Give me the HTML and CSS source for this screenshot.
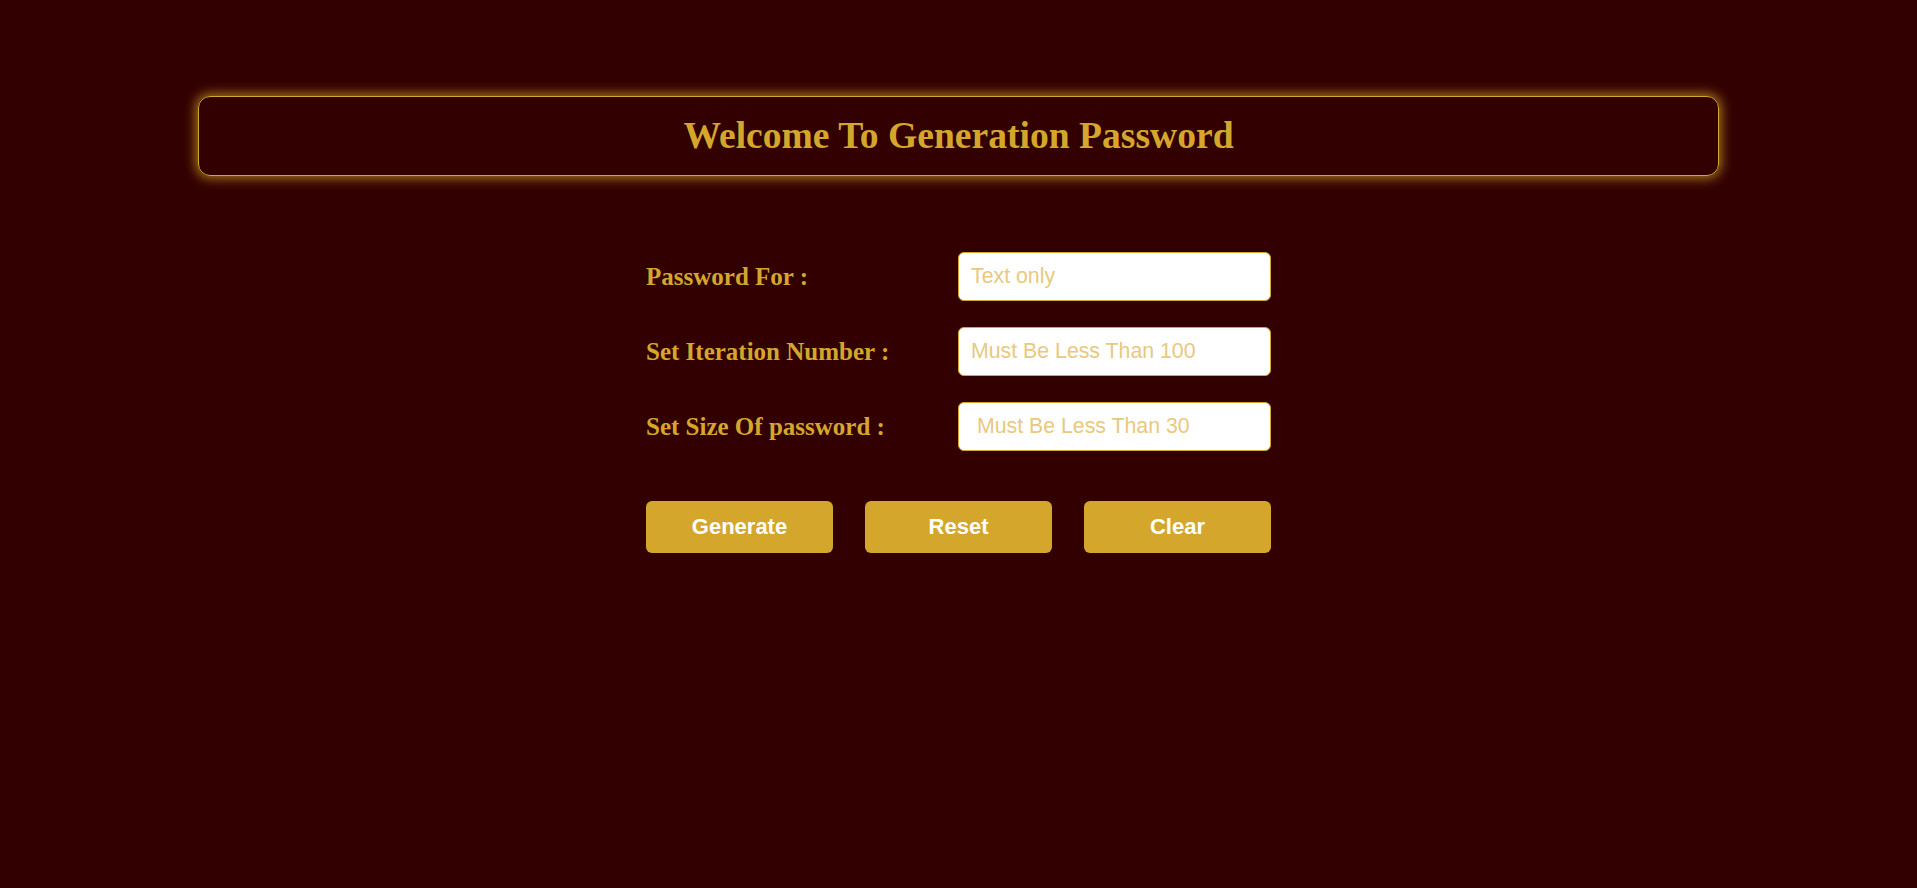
FILE: index.html
```html
<!DOCTYPE html>
<html lang="en">
<head>
<meta charset="utf-8">
<title>Generation Password</title>
<link rel="stylesheet" href="styles.css">
</head>
<body>
<header class="banner">
  <h1 class="banner-title">Welcome To Generation Password</h1>
</header>
<main class="panel">
  <form class="form-grid">
    <label class="field-label" for="pfor">Password For :</label>
    <input class="field-input" id="pfor" type="text" placeholder="Text only">
    <label class="field-label" for="piter">Set Iteration Number :</label>
    <input class="field-input" id="piter" type="text" placeholder="Must Be Less Than 100">
    <label class="field-label" for="psize">Set Size Of password :</label>
    <input class="field-input" id="psize" type="text" placeholder=" Must Be Less Than 30">
  </form>
  <div class="actions">
    <button class="btn" type="button">Generate</button>
    <button class="btn" type="button">Reset</button>
    <button class="btn" type="button">Clear</button>
  </div>
</main>
</body>
</html>
```
FILE: styles.css
```css
html, body {
  background: #330000;
}
body {
  margin: 8px;
  padding-top: 88px;
  font-family: "Liberation Serif", "Times New Roman", serif;
}
.banner {
  width: 80%;
  margin: 0 auto;
  box-sizing: border-box;
  border: 1px solid #d4a72c;
  border-radius: 12px;
  padding: 17px 0 18px;
  box-shadow: 0 0 12px 2px rgba(212, 167, 44, 0.75);
  text-align: center;
}
.banner-title {
  margin: 0;
  font-size: 37.6px;
  font-weight: bold;
  line-height: normal;
  color: #d4a72c;
}
.panel {
  width: 625px;
  margin: 76px auto 0;
}
.form-grid {
  display: grid;
  grid-template-columns: 312px 313px;
  grid-auto-rows: 49px;
  row-gap: 26px;
  align-items: center;
  margin: 0;
}
.field-label {
  font-family: "Liberation Serif", "Times New Roman", serif;
  font-size: 25px;
  font-weight: bold;
  color: #d4a72c;
}
.field-input {
  box-sizing: border-box;
  width: 313px;
  height: 49px;
  margin: 0;
  padding: 0 12px;
  border: 1px solid #d4a72c;
  border-radius: 6px;
  background: #ffffff;
  font-family: "Liberation Sans", Arial, sans-serif;
  font-size: 21.3px;
  color: #333333;
  outline: none;
}
.field-input::placeholder {
  color: #e8c97e;
  opacity: 1;
}
.actions {
  display: flex;
  justify-content: space-between;
  margin-top: 50px;
}
.btn {
  width: 187px;
  height: 52px;
  border: none;
  border-radius: 6px;
  background: #d4a72c;
  color: #ffffff;
  font-family: "Liberation Sans", Arial, sans-serif;
  font-size: 22px;
  font-weight: bold;
  padding: 0;
  cursor: pointer;
}
```
